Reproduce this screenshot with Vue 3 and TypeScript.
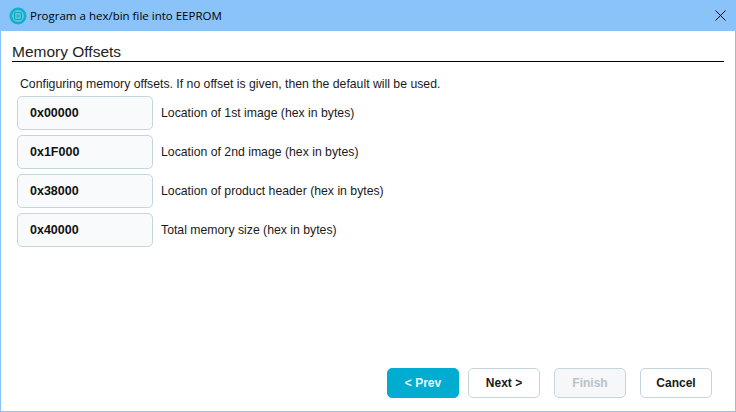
<script setup lang="ts">
interface Row { value: string; label: string }
const rows: Row[] = [
  { value: '0x00000', label: 'Location of 1st image (hex in bytes)' },
  { value: '0x1F000', label: 'Location of 2nd image (hex in bytes)' },
  { value: '0x38000', label: 'Location of product header (hex in bytes)' },
  { value: '0x40000', label: 'Total memory size (hex in bytes)' },
]
</script>

<template>
  <div class="window">
    <header class="titlebar">
      <svg class="logo" width="18" height="18" viewBox="0 0 18 18">
        <circle cx="9" cy="9" r="8.5" fill="#0fb0cf" />
        <circle cx="9" cy="9" r="6" fill="#5fc6dd" />
        <rect x="5.5" y="5.5" width="7" height="7" rx="1.5" fill="none" stroke="#0fa3c4" stroke-width="1.2" />
        <rect x="7.5" y="7.5" width="3" height="3" fill="#2fb5d2" />
      </svg>
      <span class="title">Program a hex/bin file into EEPROM</span>
      <svg class="close" width="11" height="11" viewBox="0 0 11 11">
        <path d="M0.5 0.5 L10.5 10.5 M10.5 0.5 L0.5 10.5" stroke="#000" stroke-width="1" fill="none" />
      </svg>
    </header>
    <main class="content">
      <h1 class="heading">Memory Offsets</h1>
      <div class="body">
        <p class="intro">Configuring memory offsets. If no offset is given, then the default will be used.</p>
        <div class="rows">
          <div v-for="row in rows" :key="row.value" class="row">
            <div class="field">{{ row.value }}</div>
            <span class="label">{{ row.label }}</span>
          </div>
        </div>
      </div>
      <footer class="actions">
        <div class="nav">
          <button class="btn primary">&lt; Prev</button>
          <button class="btn">Next &gt;</button>
        </div>
        <button class="btn disabled">Finish</button>
        <button class="btn">Cancel</button>
      </footer>
    </main>
  </div>
</template>

<style>
html, body { margin: 0; padding: 0; overflow: hidden; }
</style>

<style scoped>
.window {
  width: 736px;
  height: 412px;
  box-sizing: border-box;
  display: flex;
  flex-direction: column;
  background: #fff;
  border: 1px solid #8ac3fa;
  border-top: none;
  font-family: "Liberation Sans", Arial, sans-serif;
  color: #1a1a1a;
}
.titlebar {
  height: 31px;
  flex: none;
  background: #8ac3fa;
  display: flex;
  align-items: center;
  padding: 0 9px 0 8px;
}
.logo { flex: none; }
.title {
  margin-left: 3px;
  font-family: "Open Sans", "Noto Sans", sans-serif;
  font-size: 11.5px;
  color: #000;
  flex: 1;
}
.close { flex: none; }
.content {
  flex: 1;
  display: flex;
  flex-direction: column;
  padding: 11px 11px 13px 11px;
  min-height: 0;
}
.heading {
  margin: 0;
  height: 19px;
  line-height: 20px;
  font-size: 15.5px;
  font-weight: 400;
  color: #222;
  border-bottom: 1px solid #000;
}
.body { flex: 1; padding: 15px 0 0 5px; }
.intro { margin: 0 0 5px 3px; font-size: 12.25px; line-height: 14px; }
.rows { display: flex; flex-direction: column; gap: 5px; }
.row { display: flex; align-items: center; gap: 8px; }
.field {
  width: 136px;
  height: 34px;
  box-sizing: border-box;
  background: #f8fafc;
  border: 1px solid #c5d5dc;
  border-radius: 5px;
  padding-left: 12px;
  display: flex;
  align-items: center;
  font-size: 12.5px;
  font-weight: 700;
  color: #111;
}
.label { font-size: 12.25px; }
.actions { display: flex; justify-content: flex-end; gap: 14px; padding-right: 12px; }
.nav { display: flex; gap: 9px; }
.btn {
  width: 72px;
  height: 30px;
  box-sizing: border-box;
  background: #fff;
  border: 1px solid #c5d5dc;
  border-radius: 5px;
  font-family: "Liberation Sans", Arial, sans-serif;
  font-size: 12px;
  font-weight: 700;
  color: #1a1a1a;
  padding: 0;
}
.primary { background: #00acd0; border-color: #00acd0; color: #e6f7fb; }
.disabled { background: #f6f7f8; color: #b9c3c9; }
</style>
